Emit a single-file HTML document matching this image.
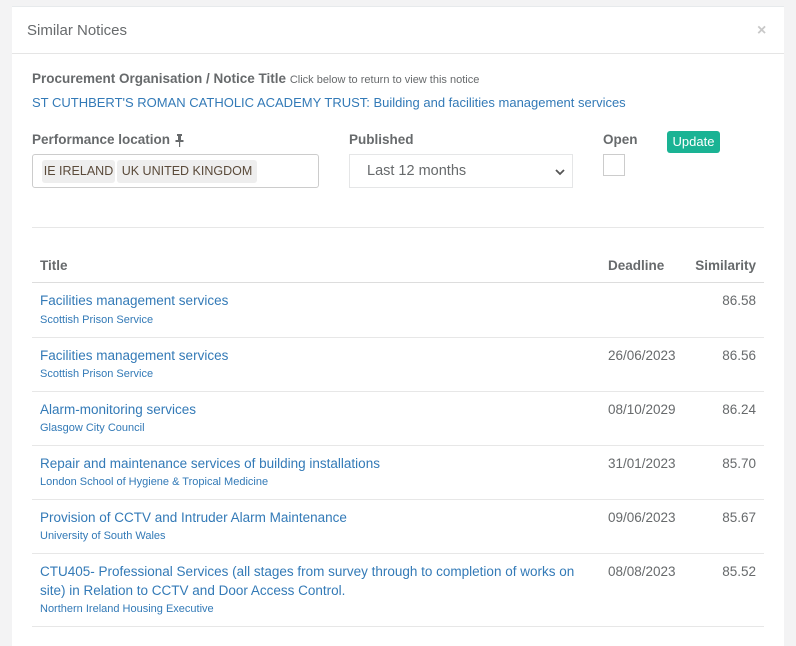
<!DOCTYPE html>
<html><head><style>
*{margin:0;padding:0;box-sizing:border-box}
body{width:796px;height:629px;background:#f3f3f4;font-family:"Liberation Sans",sans-serif;color:#676a6c;position:relative;overflow:hidden}
.modal{position:absolute;left:12px;top:6px;width:772px;height:640px;background:#fff;border-top:1px solid #e7eaec}
.a{position:absolute;white-space:nowrap}
.hd{border-bottom:1px solid #e5e5e5;position:absolute;left:0;top:0;width:772px;height:47px}
.lk{color:#337ab7}
.line{position:absolute;left:20px;width:732px;height:1px;background:#e7e7e7}
.t{font-size:13.5px;color:#337ab7}
.o{font-size:11px;color:#337ab7}
.n{font-size:13.5px;color:#676a6c}
.h{font-size:13.5px;font-weight:bold;color:#676a6c}
.tag{position:absolute;top:153px;height:23px;line-height:23px;background:#eee;border-radius:3px;font-size:12.5px;color:#5a4a3a;text-align:center;white-space:nowrap}
</style></head><body>
<div class="modal">
<div class="hd"></div>
<div class="a" style="left:15px;top:15px;font-size:15px;color:#676a6c">Similar Notices</div>
<div class="a" style="left:745px;top:15px;font-size:16px;font-weight:bold;color:#c8c8c8">×</div>
<div class="a h" style="left:20px;top:64px">Procurement Organisation / Notice Title <span style="font-weight:normal;font-size:11px">Click below to return to view this notice</span></div>
<div class="a lk" style="left:20px;top:88px;font-size:13px">ST CUTHBERT'S ROMAN CATHOLIC ACADEMY TRUST: Building and facilities management services</div>
<div class="a h" style="left:20px;top:125px">Performance location</div>
<svg class="a" style="left:163px;top:127px" width="9" height="13"><rect x="2" y="0" width="5" height="2" fill="#676a6c"/><rect x="3" y="2" width="3" height="4" fill="#676a6c"/><rect x="0.5" y="6" width="8" height="2" fill="#676a6c"/><rect x="4" y="8" width="1.2" height="5" fill="#676a6c"/></svg>
<div class="a" style="left:20px;top:147px;width:287px;height:34px;border:1px solid #ccc;border-radius:3px"></div>
<div class="tag" style="left:30px;width:73px">IE IRELAND</div>
<div class="tag" style="left:105px;width:140px">UK UNITED KINGDOM</div>
<div class="a h" style="left:337px;top:125px">Published</div>
<div class="a" style="left:337px;top:147px;width:224px;height:34px;border:1px solid #e5e6e7"></div>
<div class="a" style="left:355px;top:156px;font-size:14.5px">Last 12 months</div>
<svg class="a" style="left:543px;top:162px" width="10" height="7"><path d="M1 1l4 4 4-4" stroke="#555" stroke-width="1.8" fill="none"/></svg>
<div class="a h" style="left:591px;top:125px">Open</div>
<div class="a" style="left:591px;top:147px;width:22px;height:22px;border:1px solid #ccc"></div>
<div class="a" style="left:655px;top:124px;width:53px;height:22px;background:#1ab394;border-radius:3px;color:#fff;font-size:13px;text-align:center;line-height:22px">Update</div>
<div class="line" style="top:220px"></div>
<div class="a h" style="left:28px;top:251px">Title</div>
<div class="a h" style="left:596px;top:251px">Deadline</div>
<div class="a h" style="right:28px;top:251px">Similarity</div>
<div class="line" style="top:275px;background:#ddd"></div>

<div class="a t" style="left:28px;top:286px">Facilities management services</div>
<div class="a o" style="left:28px;top:307px">Scottish Prison Service</div>
<div class="a n" style="right:28px;top:286px">86.58</div>
<div class="line" style="top:330px"></div>

<div class="a t" style="left:28px;top:341px">Facilities management services</div>
<div class="a o" style="left:28px;top:361px">Scottish Prison Service</div>
<div class="a n" style="left:596px;top:341px">26/06/2023</div>
<div class="a n" style="right:28px;top:341px">86.56</div>
<div class="line" style="top:384px"></div>

<div class="a t" style="left:28px;top:395px">Alarm-monitoring services</div>
<div class="a o" style="left:28px;top:415px">Glasgow City Council</div>
<div class="a n" style="left:596px;top:395px">08/10/2029</div>
<div class="a n" style="right:28px;top:395px">86.24</div>
<div class="line" style="top:438px"></div>

<div class="a t" style="left:28px;top:449px">Repair and maintenance services of building installations</div>
<div class="a o" style="left:28px;top:469px">London School of Hygiene &amp; Tropical Medicine</div>
<div class="a n" style="left:596px;top:449px">31/01/2023</div>
<div class="a n" style="right:28px;top:449px">85.70</div>
<div class="line" style="top:492px"></div>

<div class="a t" style="left:28px;top:503px">Provision of CCTV and Intruder Alarm Maintenance</div>
<div class="a o" style="left:28px;top:523px">University of South Wales</div>
<div class="a n" style="left:596px;top:503px">09/06/2023</div>
<div class="a n" style="right:28px;top:503px">85.67</div>
<div class="line" style="top:546px"></div>

<div class="a t" style="left:28px;top:557px">CTU405- Professional Services (all stages from survey through to completion of works on</div>
<div class="a t" style="left:28px;top:576px">site) in Relation to CCTV and Door Access Control.</div>
<div class="a o" style="left:28px;top:596px">Northern Ireland Housing Executive</div>
<div class="a n" style="left:596px;top:557px">08/08/2023</div>
<div class="a n" style="right:28px;top:557px">85.52</div>
<div class="line" style="top:619px"></div>
</div>
</body></html>
